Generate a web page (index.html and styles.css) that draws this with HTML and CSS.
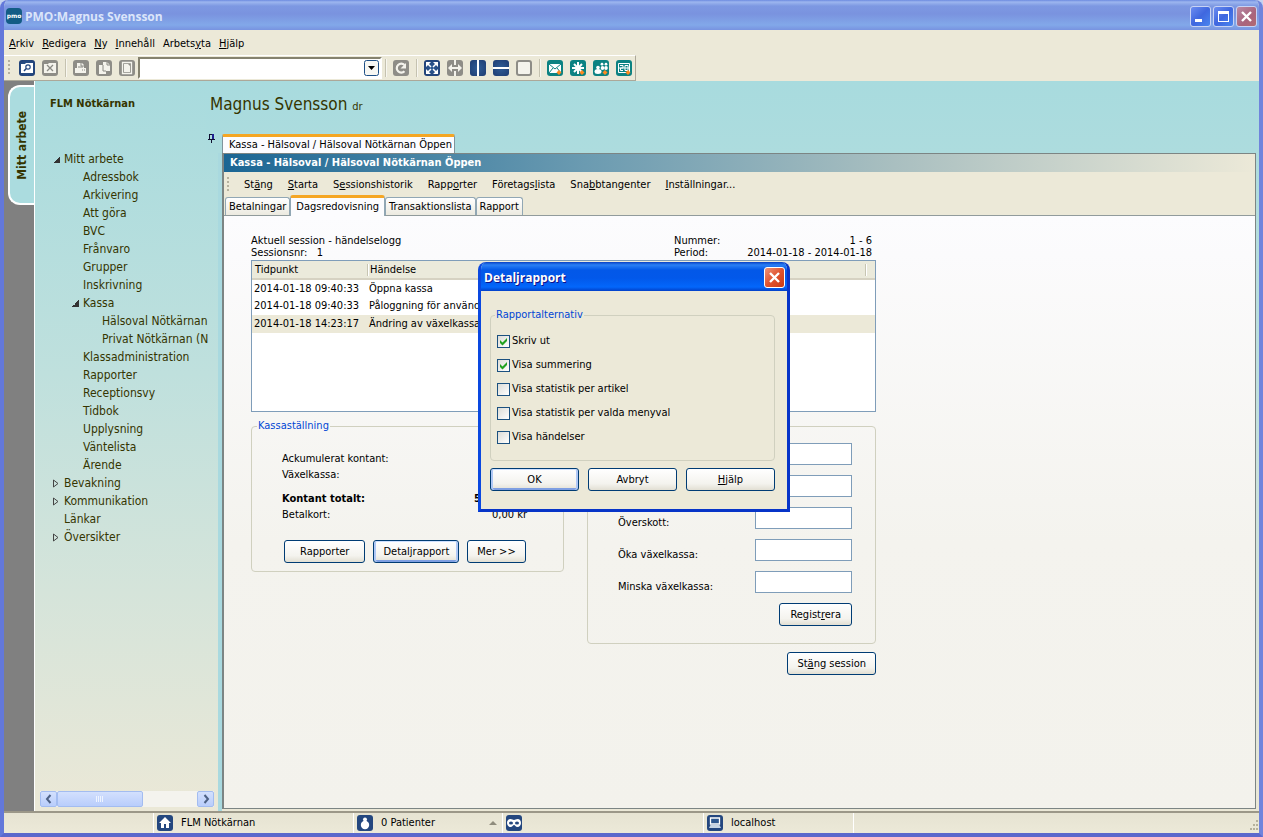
FILE: index.html
```
<!DOCTYPE html>
<html lang="sv">
<head>
<meta charset="utf-8">
<title>PMO:Magnus Svensson</title>
<link rel="stylesheet" href="styles.css">
</head>
<body>
<div class="window">
  <header class="titlebar">
    <svg class="app-logo" width="16" height="16" viewBox="0 0 16 16"><rect width="16" height="16" rx="4" fill="#135c85"/><text x="8" y="10" class="logo-text">pmo</text></svg>
    <h1 class="window-title">PMO:Magnus Svensson</h1>
    <div class="window-buttons">
      <button class="wbtn" aria-label="Minimera"><svg width="19" height="19"><path d="M4 12h7v3H4z" fill="#fff"/></svg></button>
      <button class="wbtn" aria-label="Maximera"><svg width="19" height="19"><path d="M4 4h11v11H4zM5 7v7h9V7z" fill="#fff" fill-rule="evenodd"/></svg></button>
      <button class="wbtn wbtn-close-dim" aria-label="Stäng fönster"><svg width="19" height="19"><path d="M5 5l9 9M14 5l-9 9" stroke="#fff" stroke-width="2.4"/></svg></button>
    </div>
  </header>

  <nav class="menubar">
    <button><u>A</u>rkiv</button><button><u>R</u>edigera</button><button><u>N</u>y</button><button><u>I</u>nnehåll</button><button>Arbets<u>y</u>ta</button><button><u>H</u>jälp</button>
  </nav>

  <div class="toolbar">
    <div class="tools">
      <span class="grip"></span>
      <button class="tool blue" aria-label="Sök"><svg width="16" height="16"><path d="M2 4h4l1-1h7v10H2z" fill="#fff"/><circle cx="9" cy="7" r="2.2" fill="#fff" stroke="#24477f" stroke-width="1.2"/><path d="M7.300 8.600L5 11" stroke="#24477f" stroke-width="1.500"/></svg></button>
      <button class="tool grey" aria-label="Stäng"><svg width="16" height="16"><path d="M2 4h4l1-1h7v10H2z" fill="#f4f3ec"/><path d="M5 5l6 6M11 5l-6 6" stroke="#8a8a84" stroke-width="1.300"/></svg></button>
      <span class="sep"></span>
      <button class="tool grey" aria-label="Skriv ut"><svg width="16" height="16"><path d="M4 8V3h5l2 2v3h2v5H2V8z" fill="#f4f3ec"/><path d="M5 7h5M8 3v3h3" stroke="#8a8a84" fill="none"/><path d="M9 10h1M11 10h1" stroke="#8a8a84"/></svg></button>
      <button class="tool grey" aria-label="Kopiera"><svg width="16" height="16"><path d="M3 5h4v5h3v4H3zM7 2h4l3 3v6H7z" fill="#f4f3ec"/><path d="M11 2v3h3M7 5v6h3" stroke="#8a8a84" fill="none"/></svg></button>
      <button class="tool grey" aria-label="Dokument"><svg width="16" height="16"><path d="M3.500 2.500h9v11h-9z" fill="none" stroke="#f4f3ec" stroke-width="1.300"/><path d="M5 4h4l2 2v6H5z" fill="#f4f3ec"/></svg></button>
    </div>
    <select class="combo" aria-label="Snabbval"><option></option></select>
    <div class="tools">
      <span class="sep"></span>
      <button class="tool grey" aria-label="Uppdatera"><svg width="16" height="16"><path d="M11.500 11.300A4.500 4.500 0 1 1 11.500 5" fill="none" stroke="#f4f3ec" stroke-width="2.200"/><path d="M13 3v5.500H7.500z" fill="#f4f3ec"/></svg></button>
      <span class="sep"></span>
      <button class="tool blue" aria-label="Helskärm"><svg width="16" height="16"><path d="M4 4l3 3M12 4L9 7M4 12l3-3M12 12L9 9" stroke="#fff" stroke-width="1.500"/><path d="M2 2h5L2 7zM14 2v5L9 2zM2 14V9l5 5zM14 14H9l5-5z" fill="#fff"/></svg></button>
      <button class="tool grey" aria-label="Bredd"><svg width="16" height="16"><path d="M8 0v5M8 11v5" stroke="#f4f3ec" stroke-width="2"/><path d="M3 8h10" stroke="#f4f3ec" stroke-width="2"/><path d="M1 8l4-4v8zM15 8l-4-4v8z" fill="#f4f3ec"/></svg></button>
      <button class="tool blue" aria-label="Dela lodrätt"><svg width="16" height="16"><path d="M8 0v16" stroke="#fff" stroke-width="2"/></svg></button>
      <button class="tool blue" aria-label="Dela vågrätt"><svg width="16" height="16"><path d="M0 8h16" stroke="#fff" stroke-width="2"/></svg></button>
      <button class="tool grey" aria-label="En ruta"><svg width="16" height="16"><rect x="2" y="2" width="12" height="12" rx="1" fill="#f4f3ec"/></svg></button>
      <span class="sep"></span>
      <button class="tool teal" aria-label="Nytt meddelande"><svg width="16" height="16"><path d="M2 4h12v9H2z" fill="#fff"/><path d="M2 4l6 5 6-5M2 13l4-5M14 13l-4-5" stroke="#0c8282" fill="none"/><path d="M12 10l2.500 2.500L12 15l-2.500-2.500z" fill="#ff8a1f"/></svg></button>
      <button class="tool teal" aria-label="Ny notering"><svg width="16" height="16"><path d="M8 2v12M2 8h12M4 4l8 8M12 4l-8 8" stroke="#fff" stroke-width="2"/><path d="M12 10l2.500 2.500L12 15l-2.500-2.500z" fill="#ff8a1f"/></svg></button>
      <button class="tool teal" aria-label="Ny grupp"><svg width="16" height="16"><circle cx="5" cy="7.500" r="1.800" fill="#fff"/><ellipse cx="5" cy="11.500" rx="3.500" ry="2.500" fill="#fff"/><circle cx="9" cy="4.200" r="1.400" fill="#fff"/><circle cx="13" cy="4.200" r="1.400" fill="#fff"/><ellipse cx="9.500" cy="8" rx="1.800" ry="2" fill="#fff"/><ellipse cx="13" cy="8" rx="1.800" ry="2" fill="#fff"/><path d="M12 10l2.500 2.500L12 15l-2.500-2.500z" fill="#ff8a1f"/></svg></button>
      <button class="tool teal" aria-label="Ny bokning"><svg width="16" height="16"><path d="M2.500 3.500h11v9h-11z" fill="none" stroke="#fff"/><path d="M4 5.500h3V8H4.500v2.500H7M9 5.500h3v5H9zM2 8h12" stroke="#fff" fill="none"/><path d="M12 10l2.500 2.500L12 15l-2.500-2.500z" fill="#ff8a1f"/></svg></button>
    </div>
  </div>

  <div class="workspace">
    <div class="rail"><button class="rail-tab"><span>Mitt arbete</span></button></div>

    <aside class="sidebar">
      <h2 class="unit">FLM Nötkärnan</h2>
      <ul class="tree">
        <li class="l1"><i class="open"></i><a href="#">Mitt arbete</a></li>
        <li class="l2"><i></i><a href="#">Adressbok</a></li>
        <li class="l2"><i></i><a href="#">Arkivering</a></li>
        <li class="l2"><i></i><a href="#">Att göra</a></li>
        <li class="l2"><i></i><a href="#">BVC</a></li>
        <li class="l2"><i></i><a href="#">Frånvaro</a></li>
        <li class="l2"><i></i><a href="#">Grupper</a></li>
        <li class="l2"><i></i><a href="#">Inskrivning</a></li>
        <li class="l2"><i class="open"></i><a href="#">Kassa</a></li>
        <li class="l3"><i></i><a href="#">Hälsoval Nötkärnan</a></li>
        <li class="l3"><i></i><a href="#">Privat Nötkärnan (N</a></li>
        <li class="l2"><i></i><a href="#">Klassadministration</a></li>
        <li class="l2"><i></i><a href="#">Rapporter</a></li>
        <li class="l2"><i></i><a href="#">Receptionsvy</a></li>
        <li class="l2"><i></i><a href="#">Tidbok</a></li>
        <li class="l2"><i></i><a href="#">Upplysning</a></li>
        <li class="l2"><i></i><a href="#">Väntelista</a></li>
        <li class="l2"><i></i><a href="#">Ärende</a></li>
        <li class="l1"><i><svg width="6" height="9"><path d="M.5 1v7L5 4.500z" fill="none" stroke="#444"/></svg></i><a href="#">Bevakning</a></li>
        <li class="l1"><i><svg width="6" height="9"><path d="M.5 1v7L5 4.500z" fill="none" stroke="#444"/></svg></i><a href="#">Kommunikation</a></li>
        <li class="l1"><i></i><a href="#">Länkar</a></li>
        <li class="l1"><i><svg width="6" height="9"><path d="M.5 1v7L5 4.500z" fill="none" stroke="#444"/></svg></i><a href="#">Översikter</a></li>
      </ul>
      <div class="hscroll">
        <button class="scroll-end" aria-label="Rulla åt vänster"><svg width="14" height="14"><path d="M8.500 3L5 7l3.500 4" fill="none" stroke="#4d6185" stroke-width="2"/></svg></button>
        <span class="thumb"><svg width="8" height="6"><path d="M.5 0v6M2.500 0v6M4.500 0v6M6.500 0v6" stroke="#eef4ff"/></svg></span>
        <button class="scroll-end" aria-label="Rulla åt höger"><svg width="14" height="14"><path d="M5.500 3L9 7l-3.500 4" fill="none" stroke="#4d6185" stroke-width="2"/></svg></button>
      </div>
    </aside>

    <main class="main">
      <div class="head">
        <h2 class="person">Magnus Svensson <small>dr</small></h2>
        <div class="doc-tabs">
          <svg class="pin" width="7" height="9"><path d="M1 .5h5M1.500 0v5M0 5.500h7M3.500 5v4" stroke="#101030" fill="none"/><path d="M4 0h2v5H4z" fill="#202090"/></svg>
          <button class="doc-tab">Kassa - Hälsoval / Hälsoval Nötkärnan Öppen</button>
        </div>
      </div>
      <section class="document">
        <h3 class="doc-title">Kassa - Hälsoval / Hälsoval Nötkärnan Öppen</h3>
        <nav class="doc-menu">
          <span class="grip"></span>
          <button>St<u>ä</u>ng</button><button><u>S</u>tarta</button><button>S<u>e</u>ssionshistorik</button><button>Rapp<u>o</u>rter</button><button>Företags<u>l</u>ista</button><button>Sna<u>b</u>btangenter</button><button><u>I</u>nställningar...</button>
        </nav>
        <div class="tabs">
          <button class="tab">Betalningar</button><button class="tab active">Dagsredovisning</button><button class="tab">Transaktionslista</button><button class="tab">Rapport</button>
        </div>
        <div class="pane">
          <div class="form">
            <div class="summary">
              <div>Aktuell session - händelselogg</div><div>Nummer:</div><div class="right">1 - 6</div>
              <div>Sessionsnr: &nbsp; 1</div><div>Period:</div><div class="right">2014-01-18 - 2014-01-18</div>
            </div>
            <div class="log">
              <table>
                <thead><tr><th class="c1">Tidpunkt</th><th>Händelse</th><th class="c3"></th></tr></thead>
                <tbody>
                  <tr><td>2014-01-18 09:40:33</td><td>Öppna kassa</td><td></td></tr>
                  <tr><td>2014-01-18 09:40:33</td><td>Påloggning för använd</td><td></td></tr>
                  <tr class="selected"><td>2014-01-18 14:23:17</td><td>Ändring av växelkassa</td><td></td></tr>
                </tbody>
              </table>
            </div>
            <div class="groups">
              <fieldset class="group cash">
                <legend>Kassaställning</legend>
                <dl>
                  <dt>Ackumulerat kontant:</dt><dd></dd>
                  <dt>Växelkassa:</dt><dd></dd>
                  <dt class="total">Kontant totalt:</dt><dd class="total">500,00 kr</dd>
                  <dt>Betalkort:</dt><dd>0,00 kr</dd>
                </dl>
                <div class="cash-buttons">
                  <button class="btn">Rapporter</button><button class="btn default">Detaljrapport</button><button class="btn">Mer &gt;&gt;</button>
                </div>
              </fieldset>
              <fieldset class="group entry">
                <div class="field"><input type="text" aria-label="Räknat kontant"></div>
                <div class="field"><input type="text" aria-label="Underskott"></div>
                <div class="field"><label for="over">Överskott:</label><input type="text" id="over"></div>
                <div class="field"><label for="inc">Öka växelkassa:</label><input type="text" id="inc"></div>
                <div class="field"><label for="dec">Minska växelkassa:</label><input type="text" id="dec"></div>
                <button class="btn">Regist<u>r</u>era</button>
              </fieldset>
            </div>
            <div class="closing"><button class="btn">St<u>ä</u>ng session</button></div>
          </div>
        </div>
      </section>
    </main>
  </div>

  <footer class="statusbar">
    <div class="status"></div>
    <div class="status"><svg class="sicon" width="16" height="16"><path d="M8 2l6 6h-2v5H9V9H7v4H4V8H2z" fill="#fff"/></svg>FLM Nötkärnan</div>
    <div class="status"><svg class="sicon" width="16" height="16"><circle cx="8" cy="4.500" r="2" fill="#fff"/><circle cx="8" cy="10" r="4.200" fill="#fff"/></svg>0 Patienter<i class="up"></i></div>
    <div class="status"><svg class="sicon" width="16" height="16"><path d="M4.500 4C6 4 7 5 8 5s2-1 3.500-1C14 4 15 6 15 8s-1.500 4-3.500 4S9 10 8 10s-1.500 2-3.500 2S1 10 1 8s1-4 3.500-4z" fill="#fff"/><ellipse cx="5" cy="8" rx="2" ry="1.500" fill="#24477f"/><ellipse cx="11" cy="8" rx="2" ry="1.500" fill="#24477f"/></svg></div>
    <div class="status"><svg class="sicon" width="16" height="16"><path d="M3.500 3h9v6h-9z" fill="#2f588f" stroke="#fff" stroke-width="1.300"/><path d="M2 13l1.500-3h9L14 13z" fill="#c9d6e4"/></svg>localhost</div>
    <div class="status"><svg class="sizer" width="10" height="11"><path d="M7 0h2v2H7zM4 4h2v2H4zM7 4h2v2H7zM1 8h2v2H1zM4 8h2v2H4zM7 8h2v2H7z" fill="#b5b19b"/></svg></div>
  </footer>
</div>

<div class="dialog" role="dialog" aria-labelledby="dlg-title">
  <div class="dlg-bar"><h2 id="dlg-title">Detaljrapport</h2><button class="wbtn wbtn-close" aria-label="Stäng"><svg width="19" height="19"><path d="M5 5l9 9M14 5l-9 9" stroke="#fff" stroke-width="2.4"/></svg></button></div>
  <div class="dlg-body">
    <fieldset class="group options">
      <legend>Rapportalternativ</legend>
      <label><input type="checkbox" checked>Skriv ut</label>
      <label><input type="checkbox" checked>Visa summering</label>
      <label><input type="checkbox">Visa statistik per artikel</label>
      <label><input type="checkbox">Visa statistik per valda menyval</label>
      <label><input type="checkbox">Visa händelser</label>
    </fieldset>
    <div class="dlg-buttons"><button class="btn default">OK</button><button class="btn">Avbryt</button><button class="btn"><u>H</u>jälp</button></div>
  </div>
</div>
</body>
</html>
```
FILE: styles.css
```
* { box-sizing: border-box; }
body {
  margin: 0;
  background: #c6d3f0;
  color: #000;
  font: 11px/12px "DejaVu Sans Condensed", "DejaVu Sans", sans-serif;
}
button, input, select { font: inherit; color: inherit; margin: 0; }
button { padding: 0; border: 0; background: none; white-space: nowrap; }
h1, h2, h3, ul, dl, dd { margin: 0; padding: 0; }
svg { display: block; flex: none; }
u { text-underline-offset: 1px; }

.window {
  display: flex;
  flex-direction: column;
  min-height: 100vh;
  border: solid #6f84dc;
  border-width: 0 4px 4px;
  border-radius: 8px 8px 0 0;
  border-left-color: #6378da;
  border-bottom-color: #5c68cc;
  background: #ece9d8;
  overflow: hidden;
}

.titlebar {
  display: flex;
  align-items: center;
  height: 30px;
  margin: 0 -4px;
  padding: 2px 6px 0;
  background: linear-gradient(#6c8be0 0, #9db6ef 2px, #7d98e2 6px, #7a93df 14px, #82a8e9 25px, #7893e0 30px);
}
.logo-text { font: bold 6px "DejaVu Sans", sans-serif; fill: #fff; text-anchor: middle; }
.window-title {
  flex: 1;
  padding: 2px 0 0 3px;
  font: bold 12px/16px "Open Sans", sans-serif;
  color: #dbe5fa;
}
.window-buttons { display: flex; gap: 2px; }
.wbtn {
  width: 21px;
  height: 21px;
  border: 1px solid #c8d3f4;
  border-radius: 3px;
  background: linear-gradient(135deg, #6c8df0, #3f67df 50%, #4a86ef);
}
.wbtn-close-dim { background: linear-gradient(135deg, #b98aa5, #a9647c 60%, #b36a72); }
.wbtn-close { border-color: #fff; background: linear-gradient(135deg, #ee9478, #e0532f 50%, #c93a12); }

.menubar { display: flex; align-items: center; gap: 8px; height: 25px; padding: 2px 5px 0; }

.toolbar {
  display: flex;
  align-self: flex-start;
  align-items: center;
  gap: 3px;
  height: 26px;
  padding: 0 3px 0 4px;
  border: solid;
  border-width: 1px 1px 1px 0;
  border-color: #fff #aca899 #aca899;
}
.tools { display: flex; align-items: center; gap: 7px; }
.grip {
  width: 2px;
  height: 16px;
  margin-right: 1px;
  background: repeating-linear-gradient(#b5b19f 0 2px, transparent 2px 4px);
}
.toolbar .grip { margin-right: 2px; }
.sep { width: 2px; height: 18px; margin-right: -1px; border-left: 1px solid #c5c2b0; border-right: 1px solid #f8f7f0; }
.tool { width: 16px; height: 16px; border-radius: 3px; overflow: hidden; }
.blue { background: radial-gradient(#2f5c95, #1e3c72); }
.grey { background: #8e8d87; }
.teal { background: #0c8282; }
.combo {
  width: 244px;
  height: 22px;
  border: 2px solid;
  border-color: #85826f #fff #fff #85826f;
  border-radius: 0;
  appearance: none;
  background: #fff url('data:image/svg+xml;utf8,<svg xmlns="http://www.w3.org/2000/svg" width="15" height="16"><rect x=".5" y=".5" width="14" height="15" rx="2" fill="%23f7f7f3" stroke="%231d4f86"/><path d="M4 6h7L7.500 10z"/></svg>') right 1px center no-repeat;
}

.workspace { display: flex; flex: 1; background: linear-gradient(#a8dbde, #bfe0dd 40%, #ebe8d7); }
.rail { flex: none; width: 30px; padding-top: 4px; background: #808080; }
.rail-tab {
  display: flex;
  align-items: center;
  justify-content: center;
  width: 26px;
  height: 120px;
  margin-left: 4px;
  border: 2px solid #fff;
  border-right: 0;
  border-radius: 12px 0 0 12px;
  background: #abdcdf;
  font: bold 12px/14px "DejaVu Sans Condensed", sans-serif;
  color: #353500;
}
.rail-tab span { writing-mode: vertical-rl; transform: rotate(180deg); }

.sidebar {
  display: flex;
  flex-direction: column;
  flex: none;
  width: 188px;
  padding: 16px 4px 4px 5px;
  border-left: 1px solid #fff;
  border-right: 4px solid #a9d9df;
  overflow: hidden;
  color: #353500;
}
.unit { padding-left: 10px; font: bold 11px/14px "DejaVu Sans Condensed", sans-serif; }
.tree { flex: 1; padding-top: 39px; list-style: none; font-size: 12px; line-height: 18px; white-space: nowrap; }
.tree li { display: flex; align-items: center; height: 18px; gap: 4px; }
.tree a { color: inherit; text-decoration: none; }
.tree i { width: 7px; }
.tree .open { height: 7px; background: linear-gradient(135deg, transparent 50%, #333 50%); }
.l1 { padding-left: 13px; }
.l2 { padding-left: 32px; }
.l3 { padding-left: 51px; }
.hscroll { display: flex; height: 16px; background: #f4f3ee; }
.scroll-end, .thumb {
  display: flex;
  align-items: center;
  justify-content: center;
  width: 17px;
  border: 1px solid #a3bcf0;
  border-radius: 2px;
  background: linear-gradient(#d3e0fd, #b9cdfb);
}
.thumb { width: 86px; margin-right: auto; }

.main { display: flex; flex: 1; flex-direction: column; min-width: 0; }
.head {
  display: flex;
  flex-direction: column;
  justify-content: space-between;
  height: 72px;
  margin-left: -16px;
  padding-top: 12px;
  background: linear-gradient(#a8dbde, #addcde);
}
.person { padding-left: 4px; font: 17px/22px "DejaVu Sans Condensed", sans-serif; color: #353500; }
.person small { font-size: 11px; }
.doc-tabs { display: flex; gap: 7px; padding-left: 2px; }
.doc-tab {
  height: 19px;
  padding: 0 2px 0 6px;
  border: 1px solid #80949c;
  border-width: 3px 1px 0;
  border-top-color: #f5a623;
  border-radius: 2px 2px 0 0;
  background: #fcfcff;
}
.document {
  display: flex;
  flex: 1;
  flex-direction: column;
  margin: 0 3px 2px 0;
  border: 1px solid #7c8584;
  border-left-width: 2px;
  background: #ece9d8;
}
.doc-title {
  padding: 0 6px;
  font: bold 11px/18px "DejaVu Sans Condensed", sans-serif;
  color: #fff;
  background: linear-gradient(90deg, #1b6694, #6b9bb1 35%, #a9bfc0 65%, #ece9d8);
}
.doc-menu { display: flex; align-items: center; gap: 15px; height: 23px; padding: 2px 3px 0; }
.doc-menu .grip { margin-right: 0; }
.tabs { display: flex; align-items: flex-end; height: 21px; padding: 0 1px; border-bottom: 1px solid #919b9c; }
.tab {
  height: 18px;
  padding: 0 3px;
  border: 1px solid #91a7b4;
  border-bottom: 0;
  border-radius: 3px 3px 0 0;
  background: linear-gradient(#fff, #eceae0);
}
.tab.active {
  height: 21px;
  margin-bottom: -1px;
  padding: 0 5px;
  border-top: 3px solid #f5a623;
  background: #fcfcfe;
}

.pane { flex: 1; padding: 19px 27px; background: linear-gradient(#fcfcfe, #f4f3ee 55%, #f3f2ec); }
.form { width: 625px; }
.summary { display: grid; grid-template-columns: 423px 1fr auto; padding-right: 4px; }
.right { text-align: right; }
.log { height: 152px; margin-top: 1px; border: 1px solid #7f9db9; background: #fff; }
.log table { width: 100%; border-collapse: collapse; table-layout: fixed; }
.log th {
  height: 18px;
  padding: 0 3px;
  font-weight: normal;
  text-align: left;
  background: linear-gradient(90deg, #c7c5b2 1px, #fff 1px 2px, transparent 2px) left 3px / 100% 12px no-repeat, #ebeadb;
  border-bottom: 2px solid #d6d2c2;
}
.log th.c1 { width: 115px; background: #ebeadb; }
.log th.c3 { width: 10px; }
.log td { height: 18px; padding: 0 2px; overflow: hidden; white-space: nowrap; }
.log .selected { background: #ece9d8; }

.groups { display: grid; grid-template-columns: 313px 289px; justify-content: space-between; align-items: start; margin-top: 8px; }
.group { margin: 0; border: 1px solid #d0d0bf; border-radius: 4px; min-width: 0; }
.group legend { padding: 0 1px; margin-left: -3px; color: #0046d5; }
.cash { height: 152px; padding: 21px 36px 8px 8px; }
.cash dl { display: grid; grid-template-columns: 1fr auto; row-gap: 4px; padding-left: 22px; }
dd { text-align: right; }
dt.total, dd.total { padding-top: 8px; font-weight: bold; }
.cash-buttons { display: flex; gap: 8px; margin-top: 19px; padding-left: 24px; }
.cash-buttons .btn { padding: 0 9px; }
.cash-buttons .btn:first-child { padding: 0 15px; }
.btn {
  height: 23px;
  padding: 0 8px;
  border: 1px solid #003c74;
  border-radius: 3px;
  background: linear-gradient(#fff, #f4f3ee 70%, #e2dfd3);
}
.btn.default { box-shadow: inset 0 1px #cee0ff, inset 2px 0 #b0c8f5, inset -2px 0 #b0c8f5, inset 0 -2px #7f9fe2; }
.entry { display: flex; flex-direction: column; height: 218px; margin-top: 6px; padding: 16px 23px 0 30px; }
.entry .btn { align-self: flex-end; padding: 0 10px; }
.field { display: flex; height: 32px; }
.field label { flex: 1; padding-top: 10px; }
.field input { width: 97px; height: 22px; margin-left: auto; border: 1px solid #7f9db9; background: #fff; }
.closing { display: flex; justify-content: flex-end; margin-top: 8px; }
.closing .btn { padding: 0 9px; }

.statusbar {
  display: grid;
  grid-template-columns: 149px 200px 149px 201px 150px 1fr;
  height: 22px;
  border-top: 2px solid #9b9788;
  background: linear-gradient(#e6e3d2, #ece9d8);
}
.status { display: flex; align-items: center; gap: 8px; padding-left: 3px; border-left: 1px solid #fff; }
.status:first-child { border-left: 0; }
.sicon { border-radius: 3px; background: #24477f; }
.up { margin: 0 5px 0 auto; border: 4px solid transparent; border-top: 0; border-bottom-color: #8f8c7d; }
.sizer { margin: 4px 0 0 auto; }

.dialog {
  position: absolute;
  left: 478px;
  top: 262px;
  width: 312px;
  border: 3px solid #0734c8;
  border-top: 0;
  border-left-color: #0a48e0;
  border-radius: 8px 8px 0 0;
  background: #ece9d8;
  overflow: hidden;
}
.dlg-bar {
  display: flex;
  align-items: center;
  justify-content: space-between;
  height: 29px;
  margin: 0 -3px;
  padding: 2px 5px 0 6px;
  background: linear-gradient(#0840c4 0, #2b80f5 3px, #0358e8 8px, #0258ea 16px, #0367fb 25px, #0240c8 29px);
}
.dlg-bar h2 { font: bold 12px/16px "Open Sans", sans-serif; color: #fff; text-shadow: 1px 1px #0f1089; }
.dlg-body { padding: 18px 12px 18px 9px; }
.options { height: 152px; padding: 8px 6px; }
.options legend { margin-left: -2px; }
.options label { display: flex; align-items: center; gap: 2px; height: 24px; }
.options input {
  appearance: none;
  width: 13px;
  height: 13px;
  border: 1px solid #1c5180;
  background: linear-gradient(135deg, #dcdcd7, #fff);
}
.options input:checked {
  background: url('data:image/svg+xml;utf8,<svg xmlns="http://www.w3.org/2000/svg" width="11" height="11"><path d="M2 4v3l2.500 2.500L9 5V2L4.500 6.500z" fill="%2321a121"/></svg>') center no-repeat, linear-gradient(135deg, #dcdcd7, #fff);
}
.dlg-buttons { display: grid; grid-template-columns: repeat(3, 89px); justify-content: space-between; margin-top: 7px; }
```
